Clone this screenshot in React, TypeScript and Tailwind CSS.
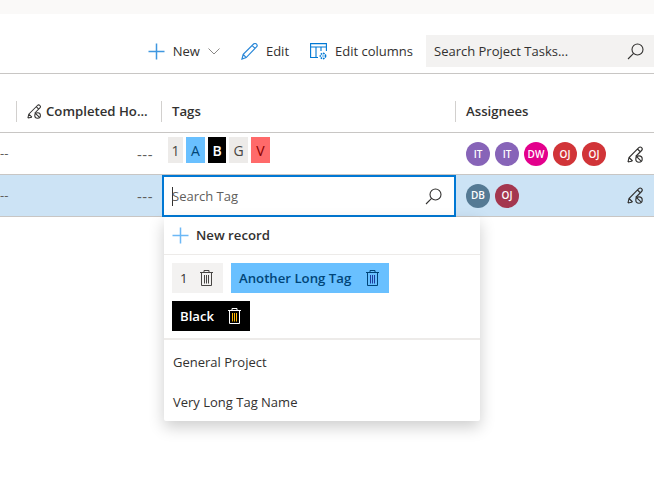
import React from 'react';

const BLUE = '#2b88d8';

const PlusIcon = ({ color = '#3f97e0' }: { color?: string }) => (
  <svg width="17" height="17" viewBox="0 0 17 17" fill="none" stroke={color} strokeWidth="1.5">
    <path d="M8.5 0.5v16M0.5 8.5h16" />
  </svg>
);

const ChevronIcon = () => (
  <svg width="12" height="7" viewBox="0 0 12 7" fill="none" stroke="#8a8886" strokeWidth="1">
    <path d="M0.5 0.5 6 6l5.5-5.5" />
  </svg>
);

const PencilIcon = () => (
  <svg width="17" height="17" viewBox="0 0 17 17" fill="none" stroke={BLUE} strokeWidth="1.2">
    <path d="M1 16l1.2-4.6L12.6 1c.9-.9 2.2-.7 2.9.1.8.8.8 2 0 2.8L5.2 14.6 1 16zM2.2 11.4l3 3.2M11.2 2.6l3.1 3" />
  </svg>
);

const ColumnsIcon = () => (
  <svg width="17" height="17" viewBox="0 0 17 17" fill="none" stroke="#0078d4" strokeWidth="1.1">
    <path d="M8 14.5H.6V.6h15.8V8M.6 4h15.8M6 4v10.5M11 4v4" />
    <circle cx="13" cy="13" r="2.6" strokeWidth="1.6" strokeDasharray="1.6 0.8" />
    <circle cx="13" cy="13" r="0.7" fill="#0078d4" stroke="none" />
  </svg>
);

const SearchIcon = () => (
  <svg width="17" height="17" viewBox="0 0 17 17" fill="none" stroke="#323130" strokeWidth="1.1">
    <circle cx="10.5" cy="6.5" r="5.5" />
    <path d="M6.6 10.4 1 16" />
  </svg>
);

// pencil with the little "no" sign, used for read only columns
const LockedPencil = ({ size = 17 }: { size?: number }) => (
  <svg width={size} height={size} viewBox="0 0 17 17" fill="none" stroke="#323130" strokeWidth="1.15">
    <path d="M1 16l1-4.5L11.8 1.7c.8-.8 2-.8 2.8 0s.8 2 0 2.8L8.6 10.5M1 16l4.6-1M2 11.5l3.6 3.5M10.5 3l3 3" />
    <circle cx="12" cy="13" r="3.2" />
    <path d="M9.8 10.8l4.4 4.4" />
  </svg>
);

const TrashIcon = ({ stroke, bars }: { stroke: string; bars: string }) => (
  <svg width="13" height="16" viewBox="0 0 13 16" fill="none" stroke={stroke} strokeWidth="1">
    <path d="M0 2.5h13M4 2.5V.5h5v2M1.5 2.5v13h10v-13" />
    <path d="M4.5 5v8.5M6.5 5v8.5M8.5 5v8.5" stroke={bars} />
  </svg>
);

const Avatar = ({ label, color }: { label: string; color: string }) => (
  <div
    className="flex h-6 w-6 items-center justify-center rounded-full text-[10px] font-semibold text-white"
    style={{ backgroundColor: color }}
  >
    {label}
  </div>
);

const MiniTag = ({ label, className }: { label: string; className: string }) => (
  <div className={`flex h-[26px] items-center justify-center text-[14px] ${className}`}>{label}</div>
);

const GridRow = ({ className, children }: { className: string; children: React.ReactNode }) => (
  <div className={`grid grid-cols-[16px_146px_294px_198px] ${className}`}>{children}</div>
);

const Toolbar = () => (
  <div className="flex h-[60px] items-center justify-end border-b border-[#c8c6c4] pb-[6px] pt-[21px] text-[#323130]">
    <PlusIcon />
    <span className="ml-2 pt-[1px]">New</span>
    <div className="ml-2 mr-[21px]">
      <ChevronIcon />
    </div>
    <PencilIcon />
    <span className="ml-2 mr-[21px] pt-[1px]">Edit</span>
    <ColumnsIcon />
    <span className="ml-2 mr-[13px] pt-[1px]">Edit columns</span>
    <div className="flex h-8 w-[228px] items-center justify-between bg-[#f3f2f1] pl-2 pr-[10px]">
      <span className="pt-[1px]">Search Project Tasks...</span>
      <SearchIcon />
    </div>
  </div>
);

const HeaderRow = () => (
  <GridRow className="h-[59px] items-center border-b border-[#c8c6c4] pb-[1px] pt-[18px] text-[13.2px] font-semibold text-[#323130]">
    <div />
    <div className="flex h-[21px] items-center gap-[4px] border-l border-[#d2d0ce] pl-[10px]">
      <LockedPencil size={15} />
      <span className="whitespace-nowrap">Completed Ho...</span>
    </div>
    <div className="-ml-px flex h-[21px] items-center border-l border-[#d2d0ce] pl-[10px]">Tags</div>
    <div className="-ml-px flex h-[21px] items-center border-l border-[#d2d0ce] pl-[10px]">Assignees</div>
  </GridRow>
);

const DashCells = () => (
  <>
    <div className="flex items-center overflow-hidden pt-[1px] text-[#605e5c]">--</div>
    <div className="flex items-center justify-end pr-[9px] pt-[1px] text-[15px] tracking-[0.5px] text-[#605e5c]">---</div>
  </>
);

const FirstRow = () => (
  <GridRow className="h-[42px] border-b border-[#c8c6c4] text-[#323130]">
    <DashCells />
    <div className="flex items-start gap-[3px] pl-[6px] pt-[4px]">
      <MiniTag label="1" className="w-[15px] bg-[#edebe9] font-medium text-[#484644]" />
      <MiniTag label="A" className="w-[19px] bg-[#69c0ff] font-medium text-[#004578]" />
      <MiniTag label="B" className="w-[18px] bg-black font-semibold text-white" />
      <MiniTag label="G" className="w-[19px] bg-[#edebe9] font-medium text-[#484644]" />
      <MiniTag label="V" className="w-[19px] bg-[#ff6a6a] font-medium text-[#8a0000]" />
    </div>
    <div className="flex items-center pl-[10px] pr-[10px] pt-[1px]">
      <div className="flex gap-[5px]">
        <Avatar label="IT" color="#8764b8" />
        <Avatar label="IT" color="#8764b8" />
        <Avatar label="DW" color="#e3008c" />
        <Avatar label="OJ" color="#d13438" />
        <Avatar label="OJ" color="#d13438" />
      </div>
      <div className="ml-auto">
        <LockedPencil />
      </div>
    </div>
  </GridRow>
);

const TagDropdown = () => (
  <div className="absolute left-[2px] top-[42px] z-10 w-[316px] rounded-[2px] bg-white text-[#323130] shadow-[0_6px_16px_rgba(0,0,0,0.2)]">
    <div className="flex h-[38px] items-center gap-[7px] border-b border-[#edebe9] pl-2 text-[13.2px]">
      <PlusIcon color="#6cb8f6" />
      <span className="font-semibold">New record</span>
    </div>
    <div className="flex h-[85px] flex-col gap-2 border-b-2 border-[#edebe9] pl-2 pt-2 text-[13.2px]">
      <div className="flex gap-2">
        <div className="flex h-[30px] w-[51px] items-center gap-3 bg-[#f3f2f1] pl-2">
          <span className="pt-[1px]">1</span>
          <TrashIcon stroke="#484644" bars="#484644" />
        </div>
        <div className="flex h-[30px] w-[158px] items-center justify-between bg-[#69c0ff] pl-2 pr-[10px] font-semibold text-[#004578]">
          <span className="whitespace-nowrap pt-[1px]">Another Long Tag</span>
          <TrashIcon stroke="#004578" bars="#1f3d9e" />
        </div>
      </div>
      <div className="flex h-[30px] w-[78px] items-center justify-between bg-black pl-2 pr-[9px] font-semibold text-white">
        <span className="pt-[1px]">Black</span>
        <TrashIcon stroke="#ffffff" bars="#ffb900" />
      </div>
    </div>
    <div className="flex h-[41px] items-center pl-[9px] pt-[4px]">General Project</div>
    <div className="flex h-[40px] items-center pl-[9px] pt-[4px]">Very Long Tag Name</div>
  </div>
);

const SelectedRow = () => (
  <GridRow className="h-[42px] border-b border-[#c8c6c4] bg-[#cce3f5] text-[#323130]">
    <DashCells />
    <div className="relative -mb-[1px]">
      <div className="flex h-full items-center border-2 border-[#0078d4] bg-white pl-2 pr-3">
        <span className="h-[19px] w-px bg-[#323130]" />
        <span className="-ml-px flex-1 pt-[1px] text-[#605e5c]">Search Tag</span>
        <SearchIcon />
      </div>
      <TagDropdown />
    </div>
    <div className="flex items-center pl-[10px] pr-[10px]">
      <div className="flex gap-[5px]">
        <Avatar label="DB" color="#557a94" />
        <Avatar label="OJ" color="#a4374f" />
      </div>
      <div className="ml-auto">
        <LockedPencil />
      </div>
    </div>
  </GridRow>
);

export default function App() {
  return (
    <div className="h-[490px] w-[654px] overflow-hidden bg-white font-['Open_Sans',sans-serif] text-[13px]">
      <div className="h-[14px] bg-[#faf9f8]" />
      <Toolbar />
      <HeaderRow />
      <FirstRow />
      <SelectedRow />
    </div>
  );
}
